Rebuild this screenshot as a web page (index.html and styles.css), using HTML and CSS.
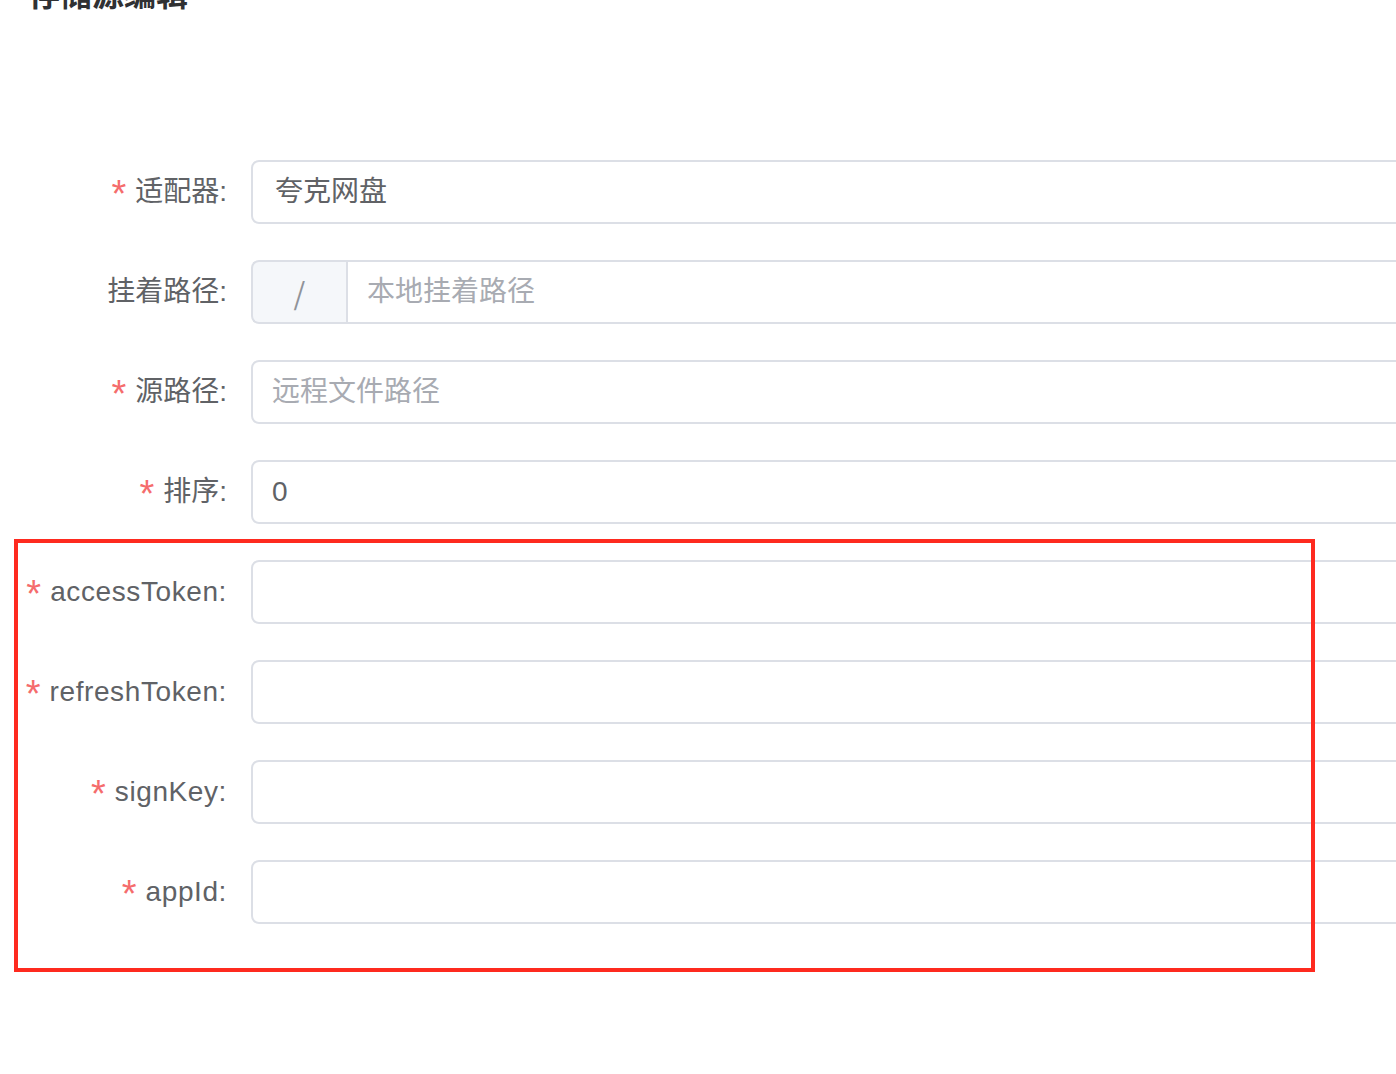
FILE: index.html
```html
<!DOCTYPE html>
<html lang="zh">
<head>
<meta charset="utf-8">
<title>存储源编辑</title>
<link rel="stylesheet" href="styles.css">
</head>
<body>
<div class="page">
  <h2 class="title">存储源编辑</h2>
  <form class="form">
    <div class="row">
      <label class="label"><span class="req">*</span>适配器:</label>
      <div class="control"><div class="input select value">夸克网盘</div></div>
    </div>
    <div class="row">
      <label class="label">挂着路径:</label>
      <div class="control group">
        <div class="prepend">/</div>
        <div class="input inner placeholder">本地挂着路径</div>
      </div>
    </div>
    <div class="row">
      <label class="label"><span class="req">*</span>源路径:</label>
      <div class="control"><div class="input placeholder">远程文件路径</div></div>
    </div>
    <div class="row">
      <label class="label"><span class="req">*</span>排序:</label>
      <div class="control"><div class="input value">0</div></div>
    </div>
    <div class="row">
      <label class="label"><span class="req">*</span><span class="latin">accessToken:</span></label>
      <div class="control"><div class="input"></div></div>
    </div>
    <div class="row">
      <label class="label"><span class="req">*</span><span class="latin">refreshToken:</span></label>
      <div class="control"><div class="input"></div></div>
    </div>
    <div class="row">
      <label class="label"><span class="req">*</span><span class="latin">signKey:</span></label>
      <div class="control"><div class="input"></div></div>
    </div>
    <div class="row">
      <label class="label"><span class="req">*</span><span class="latin">appId:</span></label>
      <div class="control"><div class="input"></div></div>
    </div>
  </form>
  <div class="highlight"></div>
</div>
</body>
</html>
```
FILE: styles.css
```css
html, body {
  margin: 0;
  padding: 0;
  background: #ffffff;
  overflow: hidden;
}
body {
  font-family: "Liberation Sans", "Noto Sans CJK SC", sans-serif;
  color: #606266;
  width: 1396px;
  height: 1074px;
}
.page {
  position: relative;
  display: flow-root;
  height: 1074px;
}
.title {
  margin: -28px 0 0 28px;
  font-size: 32px;
  line-height: 40px;
  font-weight: bold;
  color: #303133;
  font-family: "Noto Sans CJK SC", sans-serif;
}
.form {
  margin-top: 148px;
}
.row {
  display: flex;
  height: 64px;
  margin-bottom: 36px;
}
.label {
  flex: 0 0 251px;
  box-sizing: border-box;
  padding-right: 24px;
  text-align: right;
  font-size: 28px;
  line-height: 64px;
  color: #606266;
  white-space: nowrap;
}
.latin {
  letter-spacing: 0.6px;
}
.req {
  color: #f56c6c;
  margin-right: 9px;
  font-family: "Liberation Sans", sans-serif;
  font-size: 38px;
  vertical-align: -6px;
}
.control {
  flex: 0 0 1200px;
  display: flex;
}
.input {
  flex: 1;
  box-sizing: border-box;
  height: 64px;
  border: 2px solid #dcdfe6;
  border-radius: 8px;
  padding: 0 19px;
  font-size: 28px;
  line-height: 60px;
  font-family: "Liberation Sans", "Noto Sans CJK SC", sans-serif;
  background: #fff;
}
.input.select {
  padding-left: 22px;
}
.value {
  color: #606266;
}
.placeholder {
  color: #a8abb2;
}
.group .prepend {
  flex: 0 0 95px;
  box-sizing: border-box;
  height: 64px;
  background: #f5f7fa;
  border: 2px solid #dcdfe6;
  border-right: none;
  border-radius: 8px 0 0 8px;
  text-align: center;
  font-size: 30px;
  line-height: 60px;
  color: #909399;
  font-family: "Noto Sans CJK SC", sans-serif;
}
.group .inner {
  border-radius: 0 8px 8px 0;
  border-left: 2px solid #dcdfe6;
  padding-left: 19px;
}
.highlight {
  position: absolute;
  left: 14px;
  top: 539px;
  width: 1301px;
  height: 433px;
  box-sizing: border-box;
  border: 4px solid #fe2a1f;
  pointer-events: none;
}
```
